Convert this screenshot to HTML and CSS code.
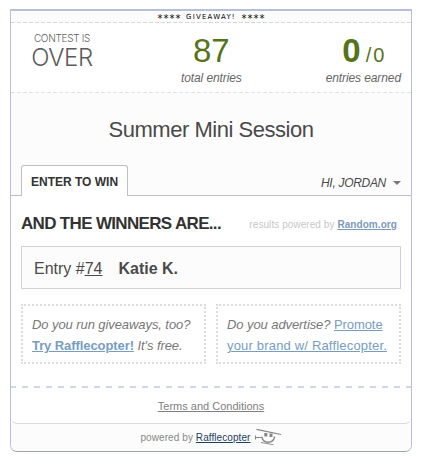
FILE: index.html
```html
<!DOCTYPE html>
<html lang="en">
<head>
    <meta charset="UTF-8">
    <meta name="viewport" content="width=device-width, initial-scale=1.0">
    <title>Summer Mini Session</title>
    <link rel="stylesheet" href="styles.css">
</head>
<body>
    <div class="widget">
        <div class="banner"><span class="stars">****</span><span>GIVEAWAY!</span><span class="stars">****</span></div>

        <div class="stats">
            <div class="stat status">
                <div class="status-label">CONTEST IS</div>
                <div class="status-value">OVER</div>
            </div>
            <div class="stat total">
                <div class="number">87</div>
                <div class="label">total entries</div>
            </div>
            <div class="stat earned">
                <div class="number"><b>0</b><span class="slash">/</span><span class="worth">0</span></div>
                <div class="label">entries earned</div>
            </div>
        </div>

        <div class="header">
            <h1 class="title">Summer Mini Session</h1>
            <div class="tabs">
                <div class="tab">ENTER TO WIN</div>
                <div class="user"><span class="user-name">HI, JORDAN</span><span class="caret"></span></div>
            </div>
        </div>

        <div class="main">
            <div class="winners-head">
                <h2 class="winners-title">AND THE WINNERS ARE...</h2>
                <div class="results">results powered by <a href="#">Random.org</a></div>
            </div>
            <div class="winner">
                <span class="entry">Entry #<u>74</u></span>
                <b class="winner-name">Katie K.</b>
            </div>
            <div class="promos">
                <div class="promo">
                    <div><em>Do you run giveaways, too?</em></div>
                    <div><a href="#"><b>Try Rafflecopter!</b></a> <em>It's free.</em></div>
                </div>
                <div class="promo">
                    <div><em>Do you advertise?</em> <a href="#">Promote</a></div>
                    <div class="brand"><a href="#">your brand w/ Rafflecopter.</a></div>
                </div>
            </div>
        </div>

        <div class="terms"><a href="#">Terms and Conditions</a></div>

        <div class="footer">
            <span class="powered">powered by <a href="#">Rafflecopter</a></span>
            <svg class="copter" width="28" height="19" viewBox="0 0 28 19" fill="none" stroke="#858585">
                <path d="M2.500 2.300L27 7.500" stroke-width="1.2"/>
                <path d="M1.500 8.500v4M1.500 10.500h5.500" stroke-width="1.1"/>
                <path d="M7.700 9.700c1.500 7.500 11.500 7.500 13 0" stroke-width="1.5"/>
                <path d="M10.300 6h3v3.500h-3zM15.500 6.500h3v3.500h-3z" fill="#858585" stroke="none"/>
                <path d="M7 15.500l12.500 2.200" stroke-width="0.9"/>
            </svg>
        </div>
    </div>
</body>
</html>
```
FILE: styles.css
```css
* {
    box-sizing: border-box;
}

body {
    margin: 0;
    padding: 9px 10px;
    background: #fff;
    color: #4a4a4a;
    font-family: "Liberation Sans", Arial, sans-serif;
}

.widget {
    width: 402px;
    height: 443px;
    border: 1px solid #b7c0d9;
    border-top-width: 2px;
    border-bottom-color: #9aa3b3;
    border-radius: 0 0 7px 7px;
    overflow: hidden;
    white-space: nowrap;
}

.banner {
    display: flex;
    justify-content: center;
    gap: 5px;
    height: 12px;
    background: repeating-linear-gradient(90deg, #d8d8d8 0 4px, transparent 4px 6px) 0 100% / 100% 1px no-repeat #fcfcfc;
    color: #000;
    font: 7px/12px "DejaVu Sans", sans-serif;
    letter-spacing: 1.2px;
}

.stars {
    font: 10px/15px "DejaVu Sans Mono", monospace;
    letter-spacing: 0;
}

/* counters */
.stats {
    display: flex;
    justify-content: space-between;
    height: 70px;
    padding: 9px 10px 0 20px;
    background: repeating-linear-gradient(90deg, #dfdff0 0 4px, transparent 4px 6px) 0 100% / 100% 1px no-repeat;
}

.stat {
    text-align: center;
}

.status {
    width: 62px;
    color: #5c5c5c;
    font-family: Inter, sans-serif;
    font-weight: 300;
}

.status-label {
    font-size: 10px;
    line-height: 12px;
    letter-spacing: -0.3px;
}

.status-value {
    font-size: 24px;
    line-height: 28px;
    letter-spacing: -0.4px;
}

.total {
    margin-left: 4px;
}

.number {
    height: 37px;
    color: #56731a;
    font-size: 33px;
    line-height: 37px;
}

.slash {
    margin-left: 5px;
    font-size: 20px;
}

.worth {
    margin-left: 2px;
    font-size: 20px;
}

.label {
    color: #666;
    font-size: 12px;
    font-style: italic;
    line-height: 18px;
    letter-spacing: -0.1px;
}

.header {
    display: flex;
    flex-direction: column;
    justify-content: space-between;
    height: 103px;
    background: #fcfcfc;
    border-bottom: 1px solid #c0c0c4;
}

.title {
    margin: 24px 0 0;
    font-size: 22px;
    font-weight: normal;
    line-height: 26px;
    letter-spacing: -0.48px;
    text-align: center;
}

.tabs {
    display: flex;
    justify-content: space-between;
    padding: 0 10px;
}

.tab {
    width: 107px;
    height: 31px;
    margin-bottom: -1px;
    padding-left: 9px;
    border: 1px solid #c0c0c4;
    border-bottom: 0;
    border-radius: 3px 3px 0 0;
    background: #fff;
    color: #333;
    font-size: 12px;
    font-weight: bold;
    line-height: 32px;
}

.user {
    display: flex;
    align-items: center;
    gap: 7px;
    padding-top: 5px;
    font-size: 12px;
    font-style: italic;
    letter-spacing: -0.3px;
}

.caret {
    border: 4px solid transparent;
    border-top-color: #777;
    border-bottom: 0;
}

.main {
    height: 192px;
    padding: 17px 10px 0;
    background: repeating-linear-gradient(90deg, #cfd8e6 0 6px, transparent 6px 12px) -1px 100% / 110% 2px no-repeat;
}

.winners-head {
    display: flex;
    justify-content: space-between;
    align-items: center;
    height: 22px;
    padding-right: 4px;
}

.winners-title {
    margin: 0;
    color: #333;
    font-size: 17px;
    letter-spacing: -0.67px;
}

.results {
    color: #c8c8c8;
    font-size: 10px;
    letter-spacing: 0.07px;
}

.results a {
    color: #7b9ab8;
    font-weight: bold;
}

.winner {
    display: flex;
    gap: 16px;
    height: 43px;
    margin-top: 11px;
    padding-left: 12px;
    border: 1px solid #d2d2d2;
    background: #fcfcfc;
    font-size: 16px;
    line-height: 43px;
}

.promos {
    display: flex;
    gap: 10px;
    margin-top: 15px;
}

.promo {
    flex: 1;
    height: 60px;
    padding: 8px 9px;
    border: 2px dotted #dcdcdc;
    color: #777;
    font-size: 13px;
    line-height: 21px;
    letter-spacing: -0.08px;
}

.promo a {
    color: #779dbf;
}

.brand {
    letter-spacing: 0.18px;
}

.terms {
    height: 36px;
    border-bottom: 1px solid #dadada;
    border-radius: 0 0 6px 6px;
    font-size: 11px;
    line-height: 36px;
    text-align: center;
}

.terms a {
    color: #808080;
}

.footer {
    display: flex;
    justify-content: center;
    height: 27px;
    background: #fcfcfc;
    color: #888;
    font-size: 10px;
    line-height: 28px;
    letter-spacing: 0.08px;
}

.footer a {
    color: #1d4063;
}

.copter {
    margin: 3px 0 0 3px;
}
```
